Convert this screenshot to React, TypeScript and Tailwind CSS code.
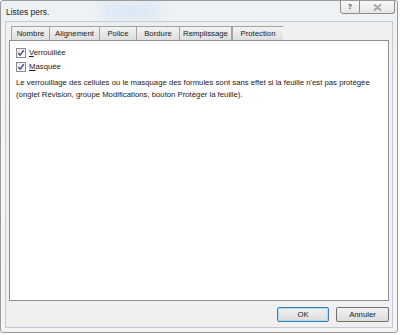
import React from "react";

const font = { fontFamily: '"Liberation Sans", Arial, sans-serif' };

function Tab({ label, active, w }: { label: string; active?: boolean; w: string }) {
  if (active) {
    return (
      <div
        className={`${w} h-[16px] -mb-px -ml-[2px] relative z-10 border border-b-0 border-[#8e8f8f] bg-white flex items-start justify-center pt-[2px] text-[7.75px] text-[#1a1a1a]`}
      >
        {label}
      </div>
    );
  }
  return (
    <div
      className={`${w} h-[14px] border border-b-0 border-r-0 border-[#a3a3a3] bg-gradient-to-b from-[#f3f3f3] to-[#dedede] flex items-center justify-center text-[7.75px] text-[#1a1a1a]`}
    >
      {label}
    </div>
  );
}

function Check({ children }: { children: React.ReactNode }) {
  return (
    <div className="flex items-center gap-[3px] h-[12px]">
      <div className="w-[10px] h-[10px] border border-[#8c8c8c] bg-gradient-to-br from-[#e9e9e9] to-white flex items-center justify-center">
        <svg width="8" height="8" viewBox="0 0 8 8">
          <path d="M1.3 4 L3.2 6.2 L6.8 1.2" fill="none" stroke="#3b4c8f" strokeWidth="1.4" />
        </svg>
      </div>
      <span className="text-[7.75px] text-[#1a1a1a]">{children}</span>
    </div>
  );
}

export default function App() {
  return (
    <div className="w-[400px] h-[335px] bg-white" style={font}>
      <div className="w-[398px] h-[333px] border border-[#9a9a9a] rounded-[3px] bg-gradient-to-b from-[#eef1f4] via-[#f6f7f8] to-[#f4f4f4] flex flex-col relative overflow-hidden">
        <div className="absolute left-[100px] top-0 w-[60px] h-[20px] rounded-full bg-[#cfe3f5] opacity-60 blur-[6px]" />
        <div className="h-[20px] flex items-start justify-between relative">
          <div className="pl-[5px] pt-[5px] text-[8.5px] text-[#222]">Listes pers.</div>
          <div className="flex mr-[2px] -mt-px">
            <div className="w-[20px] h-[14px] border border-[#8d8d8d] rounded-bl-[3px] bg-gradient-to-b from-[#f9f9f9] to-[#e6e6e6] flex items-center justify-center text-[7px] text-[#444] font-bold">
              ?
            </div>
            <div className="w-[35px] h-[14px] border border-l-0 border-[#8d8d8d] rounded-br-[3px] bg-gradient-to-b from-[#f9f9f9] to-[#e6e6e6] flex items-center justify-center">
              <svg width="9" height="7" viewBox="0 0 9 7">
                <path d="M1 0.5 L8 6.5 M8 0.5 L1 6.5" stroke="#7a7a7a" strokeWidth="1.6" fill="none" />
                <path d="M1 0.5 L8 6.5 M8 0.5 L1 6.5" stroke="#f5f5f5" strokeWidth="0.5" fill="none" />
              </svg>
            </div>
          </div>
        </div>
        <div className="mx-[4px] mb-[4px] flex-1 bg-[#f0f0f0] border border-[#c4c9cf] flex flex-col">
          <div className="flex items-end pl-[5px] pt-[4px] relative">
            <Tab label="Nombre" w="w-[38px]" />
            <Tab label="Alignement" w="w-[50px]" />
            <Tab label="Police" w="w-[37px]" />
            <Tab label="Bordure" w="w-[43px]" />
            <div className="border-r border-[#a3a3a3] flex">
              <Tab label="Remplissage" w="w-[52px]" />
            </div>
            <Tab label="Protection" w="w-[51px]" />
          </div>
          <div className="mx-[3px] h-[261px] bg-white border border-[#8e8f8f] pl-[6px] pt-[6px] flex flex-col">
            <div className="flex flex-col gap-[2px]">
              <Check>
                <span className="underline">V</span>errouillée
              </Check>
              <Check>
                <span className="underline">M</span>asquée
              </Check>
            </div>
            <p className="mt-[4px] text-[7.75px] leading-[12px] text-[#1a1a1a]">
              Le verrouillage des cellules ou le masquage des formules sont sans effet si la feuille n'est pas protégée
              <br />
              (onglet Révision, groupe Modifications, bouton Protéger la feuille).
            </p>
          </div>
          <div className="flex justify-end gap-[7px] pr-[3px] pt-[6px]">
            <div className="w-[52px] h-[15px] border border-[#3c7fb1] rounded-[2px] bg-gradient-to-b from-[#f2f2f2] to-[#dcdcdc] shadow-[inset_0_0_0_1px_#a9dcf6] flex items-center justify-center text-[7.75px] text-[#1a1a1a]">
              OK
            </div>
            <div className="w-[53px] h-[15px] border border-[#707070] rounded-[2px] bg-gradient-to-b from-[#f2f2f2] to-[#dcdcdc] flex items-center justify-center text-[7.75px] text-[#1a1a1a]">
              Annuler
            </div>
          </div>
        </div>
      </div>
    </div>
  );
}
